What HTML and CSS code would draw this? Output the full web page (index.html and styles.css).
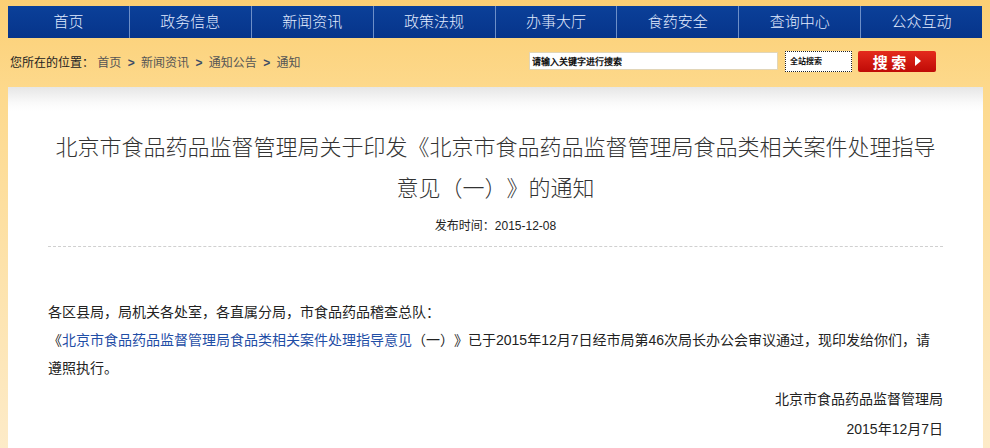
FILE: index.html
```html
<!DOCTYPE html>
<html lang="zh-CN">

<head>
    <meta charset="UTF-8">
    <title>北京市食品药品监督管理局 - 通知</title>
    <link rel="stylesheet" href="styles.css">
</head>

<body>
    <ul class="nav">
        <li><a href="#">首页</a></li>
        <li><a href="#">政务信息</a></li>
        <li><a href="#">新闻资讯</a></li>
        <li><a href="#">政策法规</a></li>
        <li><a href="#">办事大厅</a></li>
        <li><a href="#">食药安全</a></li>
        <li><a href="#">查询中心</a></li>
        <li><a href="#">公众互动</a></li>
    </ul>
    <div class="bar">
        <div class="crumb">
            <span class="here">您所在的位置：</span>
            <a href="#">首页</a> <b>&gt;</b> <a href="#">新闻资讯</a> <b>&gt;</b> <a href="#">通知公告</a> <b>&gt;</b> <a href="#">通知</a>
        </div>
        <div class="search">
            <input type="text" class="keyword" value="请输入关键字进行搜索">
            <div class="scope">全站搜索</div>
            <button class="go">搜 索 <i></i></button>
        </div>
    </div>
    <div class="main">
        <h1 class="title">北京市食品药品监督管理局关于印发《北京市食品药品监督管理局食品类相关案件处理指导意见（一）》的通知</h1>
        <p class="info">发布时间：2015-12-08</p>
        <div class="content">
            <p>各区县局，局机关各处室，各直属分局，市食品药品稽查总队：</p>
            <p>《<a href="#">北京市食品药品监督管理局食品类相关案件处理指导意见</a>（一）》已于2015年12月7日经市局第46次局长办公会审议通过，现印发给你们，请遵照执行。</p>
            <p class="sign">北京市食品药品监督管理局</p>
            <p class="sign">2015年12月7日</p>
        </div>
    </div>
</body>

</html>
```

FILE: styles.css
```css
* {
    margin: 0;
    padding: 0;
    box-sizing: border-box;
}

body {
    height: 448px;
    overflow: hidden;
    background: linear-gradient(#fbcf74, #fdd98c 90px, #fde4b0 300px, #fdebc8);
    font-family: "Liberation Sans", "Noto Sans CJK SC", sans-serif;
    color: #333;
}

a {
    text-decoration: none;
}

ul {
    list-style: none;
}

/* 导航 */
.nav {
    display: flex;
    height: 32px;
    margin: 6px 8px 0 8px;
}

.nav li {
    flex: 1;
    border-right: 1px solid #6d8fc8;
    background: linear-gradient(#0b4099, #06348a);
}

.nav li:last-child {
    border-right: none;
}

.nav a {
    display: block;
    line-height: 32px;
    text-align: center;
    font-size: 15px;
    font-weight: 300;
    color: #e3ecff;
}

/* 位置 + 搜索 */
.bar {
    display: flex;
    justify-content: space-between;
    align-items: center;
    height: 46px;
    padding: 0 0 0 10px;
}

.crumb {
    font-size: 12px;
    color: #555;
}

.crumb .here {
    color: #222;
}

.crumb a {
    color: #555;
}

.crumb b {
    color: #3d4d66;
    margin: 0 3px;
}

.search {
    display: flex;
    align-items: center;
    margin-right: 54px;
}

.keyword {
    width: 249px;
    height: 18px;
    border: 1px solid #e2d6b8;
    padding: 0 2px;
    font-size: 9px;
    font-weight: bold;
    color: #111;
    outline: none;
}

.scope {
    width: 67px;
    height: 21px;
    margin-left: 7px;
    border: 1px dotted #222;
    background: #fff;
    padding-left: 4px;
    font-size: 8px;
    font-weight: bold;
    line-height: 19px;
    color: #111;
}

.go {
    display: flex;
    align-items: center;
    justify-content: center;
    width: 78px;
    height: 21px;
    margin-left: 6px;
    border: none;
    border-radius: 2px;
    background: linear-gradient(#e42a1c, #bf0a06);
    font-family: "Noto Sans CJK SC", sans-serif;
    font-size: 15px;
    font-weight: bold;
    color: #fff;
}

.go i {
    width: 0;
    height: 0;
    margin-left: 9px;
    border-top: 5px solid transparent;
    border-bottom: 5px solid transparent;
    border-left: 6px solid #fff;
}

/* 正文 */
.main {
    margin: 3px 7px 0 8px;
    height: 361px;
    padding: 38px 40px 0;
    background: linear-gradient(#e6e6e6, #fafafa 16px, #fff 24px);
    text-spacing-trim: space-all;
}

.title {
    font-size: 22px;
    font-weight: 300;
    line-height: 41px;
    text-align: center;
    color: #333;
    font-family: "Noto Sans CJK SC", sans-serif;
}

.info {
    margin-top: 9px;
    padding-bottom: 10px;
    border-bottom: 1px dashed #d0d0d0;
    font-size: 12px;
    line-height: 20px;
    text-align: center;
    color: #222;
}

.content {
    padding-top: 51px;
    font-size: 14px;
    line-height: 28px;
    color: #222;
}

.content a {
    color: #1f4ea6;
}

.content .sign {
    text-align: right;
    line-height: 30px;
}

.content .sign:nth-child(3) {
    margin-top: 2px;
}
```
